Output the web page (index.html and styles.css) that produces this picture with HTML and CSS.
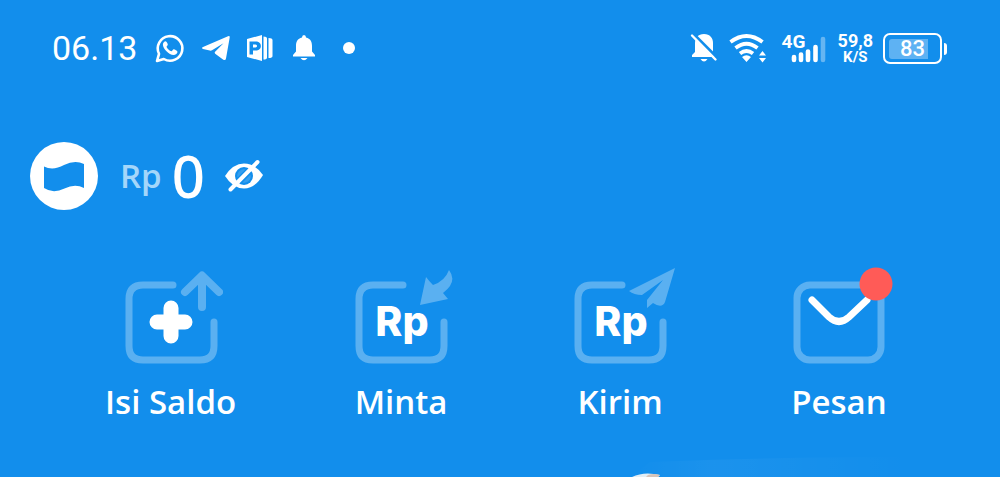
FILE: index.html
```html
<!DOCTYPE html>
<html lang="id">
<head>
<meta charset="utf-8">
<meta name="viewport" content="width=device-width, initial-scale=1">
<title>Saldo</title>
<link rel="stylesheet" href="styles.css">
</head>
<body>
<header class="status">
  <div class="status-left">
    <time class="clock">06.13</time>
    <svg class="i-chat" viewBox="0 0 30 30" width="30" height="30" aria-hidden="true"><path d="M2 28l2-7.200A12.300 12.300 0 1 1 8.800 26z" fill="none" stroke="#fff" stroke-width="2.600" stroke-linejoin="round"/><path d="M10.500 8.200c-1 0-2.600 1.400-2.600 3.600 0 4 6.100 10.200 10.600 10.200 2.200 0 4-1.400 4-3.200 0-.8-3-2.500-3.800-2.500s-1.500 2-2.300 2c-1.300 0-4.800-3.100-4.800-4.500 0-.7 1.200-1.300 1.200-2.100s-1-3.500-2.300-3.500z" fill="#fff"/></svg>
    <svg class="i-plane" viewBox="0 0 30 26" width="30" height="26" aria-hidden="true"><path d="M2 12L27 1.200q2-.7 1.700 1.200L25 23.500q-.5 2.500-3 1l-7.800-5.700q-1.100-1-.1-2l8.400-8.600L11 15.300q-1 .6-2.200.3L2 14q-2-1 0-2z" fill="#fff"/></svg>
    <svg class="i-slides" viewBox="0 0 26 26" width="26" height="26" aria-hidden="true"><path fill-rule="evenodd" d="M0 4L15 0v26L0 22zM2.500 6.500v13h3.500v-4h3c6.500 0 6.500-9 0-9zm3.500 3h2.500c2 0 2 3 0 3H6z" fill="#fff"/><path d="M16.500 1.500q3.500 0 3.500 2v19q0 2-3.500 2zM21.500 3q4 0 4 2v16q0 2-4 2z" fill="#fff"/></svg>
    <svg class="i-bell" viewBox="0 0 22 26" width="22" height="26" aria-hidden="true"><path d="M11 0q2 0 2 2.600c4.500 1 6 4.400 6 8.400v5.500l3 3.500v1.500H0V20l3-3.500V11c0-4 1.500-7.400 6-8.400Q9 0 11 0zM7.500 23h7q-3.500 4.500-7 0z" fill="#fff"/></svg>
    <span class="dot"></span>
  </div>
  <div class="status-right">
    <svg class="i-muted" viewBox="0 0 26 30" width="26" height="30" aria-hidden="true"><path d="M13 1c6 0 9 4 9 9v11l2 3H1v-2l3-3v-9c0-5 3-9 9-9zM9.500 26h7q-3.500 5-7 0z" fill="#fff"/><path d="M2.500 1L26 24.500" stroke="#128eec" stroke-width="3"/><path d="M1 2.500l23.500 24" stroke="#fff" stroke-width="2.400" stroke-linecap="round"/></svg>
    <svg class="i-wifi" viewBox="0 0 37 30" width="37" height="30" aria-hidden="true"><g fill="none" stroke="#fff" stroke-width="3.800"><path d="M1.500 9q16-12 32 0"/><path d="M6.500 15q11-8.500 22 0"/><path d="M11 20.500q6.500-5 13 0"/></g><path d="M13 24q4.500-3.500 9 0l-4.500 5zM30 22.500l3.500-4.500 3.500 4.500zM30 25h7l-3.500 4.500z" fill="#fff"/></svg>
    <div class="signal">
      <span class="network">4G</span>
      <svg viewBox="0 0 34 27" width="34" height="27" aria-hidden="true"><g stroke="#fff" stroke-width="4.600" stroke-linecap="round"><path d="M2 20v3M9 17.500V23M16 14.500V23M23.500 10v13"/><path d="M31 2v21" opacity=".35"/></g></svg>
    </div>
    <div class="rate"><span class="rate-value">59,8</span><span class="rate-unit">K/S</span></div>
    <div class="battery"><span class="battery-level">83</span></div>
  </div>
</header>
<main>
  <section class="balance">
    <svg class="logo" viewBox="0 0 68 68" width="68" height="68" role="img" aria-label="Dompet"><circle cx="34" cy="34" r="34" fill="#fff"/><path d="M14 24.500Q23 29 34 23q11-5.500 20-1v24q-9-4.500-19.500.5Q23 52 14 46z" fill="#128eec"/></svg>
    <span class="currency">Rp</span>
    <span class="amount">0</span>
    <button class="toggle" type="button" aria-label="Sembunyikan saldo"><svg viewBox="0 0 38 32" width="38" height="32"><path d="M0 16Q8 3.500 19 3.500T38 15Q30 28.500 19 28.500T0 16z" fill="#fff"/><circle cx="19" cy="16" r="9" fill="#128eec"/><path d="M12.500 17.500a6.500 6.500 0 0 1 8-8zM25.500 14.500a6.500 6.500 0 0 1-8 8z" fill="#fff" opacity=".15"/><path d="M5.500 29.500L32.500 2" stroke="#fff" stroke-width="4" stroke-linecap="round"/></svg></button>
  </section>
  <nav class="actions">
    <button class="action" type="button">
      <svg viewBox="0 0 108 98" width="108" height="98" aria-hidden="true"><g class="faint"><path d="M56 19H26Q12 19 12 33V80Q12 94 26 94H83Q97 94 97 80V56" stroke-width="7"/><path d="M85 41V10M68 26L85 9.500 102 26" stroke-width="8"/></g><path d="M54 42v28M40 56h28" stroke="#fff" stroke-width="15" stroke-linecap="round"/></svg>
      <span>Isi Saldo</span>
    </button>
    <button class="action" type="button">
      <svg viewBox="0 0 108 98" width="108" height="98" aria-hidden="true"><g class="faint"><path d="M56 19H26Q12 19 12 33V80Q12 94 26 94H83Q97 94 97 80V56" stroke-width="7"/><path class="solid" d="M73 39L79 11q3 4 7 8Q98 15 102 4q9 12-6 23l5 6z"/></g><text class="rp" x="55" y="70">Rp</text></svg>
      <span>Minta</span>
    </button>
    <button class="action" type="button">
      <svg viewBox="0 0 108 98" width="108" height="98" aria-hidden="true"><g class="faint"><path d="M56 19H26Q12 19 12 33V80Q12 94 26 94H83Q97 94 97 80V56" stroke-width="7"/><path class="solid" d="M109 2L63 25q5 4 13 4L97 14 81 34v8l6-5q9 6 12-1z"/></g><text class="rp" x="55" y="70">Rp</text></svg>
      <span>Kirim</span>
    </button>
    <button class="action" type="button">
      <svg viewBox="0 0 108 98" width="108" height="98" aria-hidden="true"><g class="faint"><rect x="12" y="19" width="84" height="75" rx="13" stroke-width="7"/></g><path d="M27 34L44 51q10 9 20 0L82 34" fill="none" stroke="#fff" stroke-width="7" stroke-linecap="round"/><circle cx="91" cy="18" r="16.500" fill="#ff5b57"/></svg>
      <span>Pesan</span>
    </button>
  </nav>
</main>
<footer class="peek">
  <svg viewBox="0 0 280 20" width="280" height="20" aria-hidden="true"><defs><linearGradient id="glow"><stop offset="0" stop-color="#fff" stop-opacity="0"/><stop offset=".3" stop-color="#fff" stop-opacity=".04"/><stop offset="1" stop-color="#fff" stop-opacity="0"/></linearGradient></defs><path d="M20 5Q140 0 280 0v20H0z" fill="url(#glow)"/><path d="M2 20q12-6 28-2l-2 2z" fill="#e3eef5"/><path d="M18 18q6-2 12 0l-2 2H16z" fill="#d6c4ba"/></svg>
</footer>
</body>
</html>
```
FILE: styles.css
```css
* { box-sizing: border-box; }
body {
  margin: 0;
  min-height: 100vh;
  display: flex;
  flex-direction: column;
  overflow: hidden;
  background: #128eec;
  color: #fff;
  font-family: "Open Sans", "Noto Sans", sans-serif;
}
svg { display: block; flex: none; overflow: visible; }
button {
  padding: 0;
  border: 0;
  background: none;
  color: inherit;
  font: inherit;
  cursor: pointer;
}
.status {
  display: flex;
  justify-content: space-between;
  align-items: center;
  padding: 24px 58px 0 52px;
  font-family: Roboto, sans-serif;
}
.status-left, .status-right { display: flex; align-items: center; }
.status-left { gap: 16px; }
.status-right { gap: 12px; }
.clock { margin-right: 2px; font-size: 34px; line-height: 48px; }
.i-bell { margin: 0 12px 0 4px; }
.dot { width: 12px; height: 12px; border-radius: 50%; background: #fff; }
.signal { display: grid; width: 44px; margin-left: 4px; }
.signal > * { grid-area: 1 / 1; }
.signal svg { justify-self: end; align-self: end; }
.network { font-size: 19px; line-height: 20px; font-weight: 700; padding-bottom: 12px; }
.rate { display: flex; flex-direction: column; align-items: center; font-weight: 700; }
.rate-value { font-size: 18px; line-height: 18px; }
.rate-unit { font-size: 15px; line-height: 15px; }
.battery {
  position: relative;
  width: 59px;
  height: 31px;
  margin-left: -2px;
  padding: 4px;
  border: 2px solid #fff;
  border-radius: 7px;
}
.battery::after {
  content: "";
  position: absolute;
  right: -7px;
  top: 8px;
  width: 3px;
  height: 12px;
  border-radius: 0 3px 3px 0;
  background: #fff;
}
.battery-level {
  display: block;
  font-size: 22px;
  line-height: 20px;
  font-weight: 500;
  text-align: center;
  background: linear-gradient(90deg, #5eb2f3 83%, transparent 83%);
  border-radius: 3px;
}
.balance {
  display: flex;
  align-items: center;
  margin-top: 64px;
  padding-left: 30px;
}
.currency { margin-left: 22px; font-size: 33px; line-height: 44px; font-weight: 600; color: #a4d6fa; }
.amount { margin-left: 10px; font-size: 58px; line-height: 80px; font-family: "Noto Sans", sans-serif; font-weight: 500; }
.toggle { margin-left: 20px; }
.actions {
  display: flex;
  justify-content: space-between;
  margin-top: 50px;
  padding: 0 107px 0 105px;
}
.action {
  display: flex;
  flex-direction: column;
  align-items: center;
  gap: 14px;
  font-size: 33px;
  line-height: 48px;
  font-weight: 600;
}
.faint { fill: none; stroke: #fff; stroke-linecap: round; stroke-linejoin: round; opacity: .3; }
.solid { fill: #fff; stroke: none; }
.rp { fill: #fff; font-family: Inter, sans-serif; font-size: 41px; font-weight: 800; text-anchor: middle; }
.peek { margin: auto 0 0 63%; }
```
